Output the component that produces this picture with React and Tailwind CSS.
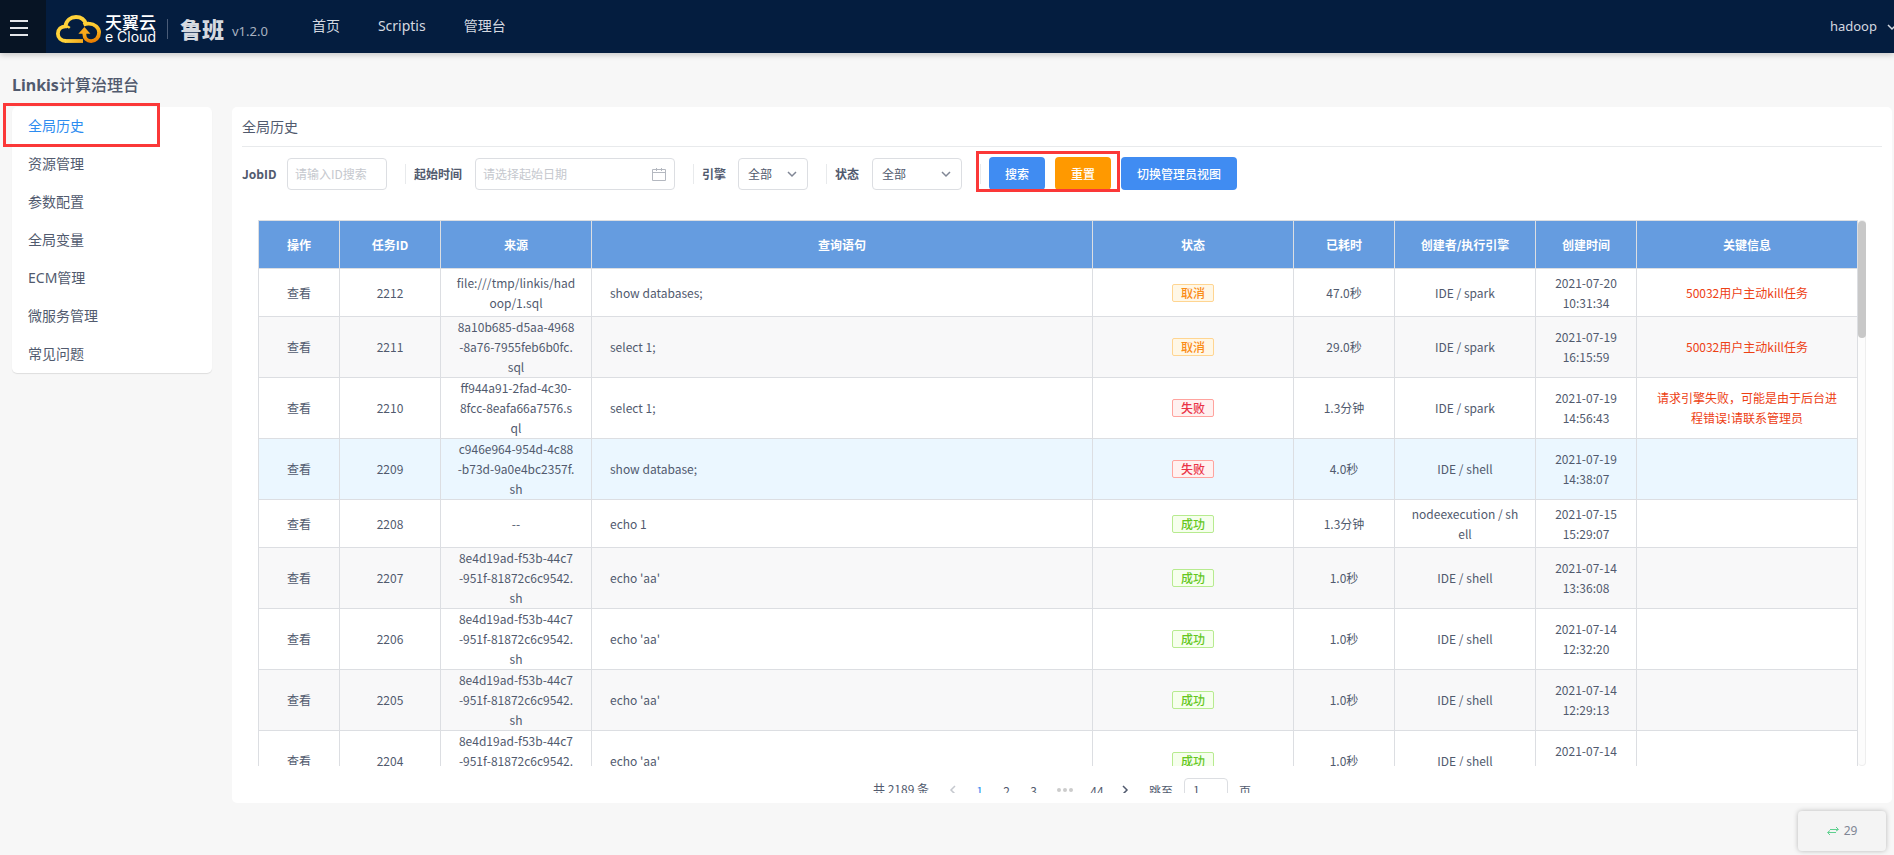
import React from "react";

const menu = ["全局历史", "资源管理", "参数配置", "全局变量", "ECM管理", "微服务管理", "常见问题"];

const columns = [
  { title: "操作", width: "w-[81px]" },
  { title: "任务ID", width: "w-[101px]" },
  { title: "来源", width: "w-[151px]" },
  { title: "查询语句", width: "w-auto" },
  { title: "状态", width: "w-[201px]" },
  { title: "已耗时", width: "w-[101px]" },
  { title: "创建者/执行引擎", width: "w-[141px]" },
  { title: "创建时间", width: "w-[101px]" },
  { title: "关键信息", width: "w-[221px]" },
];

const AA = ["8e4d19ad-f53b-44c7", "-951f-81872c6c9542.", "sh"];

const rows = [
  { id: 2212, source: ["file:///tmp/linkis/had", "oop/1.sql"], code: "show databases;", status: "取消", cost: "47.0秒", engine: ["IDE / spark"], time: ["2021-07-20", "10:31:34"], info: ["50032用户主动kill任务"] },
  { id: 2211, source: ["8a10b685-d5aa-4968", "-8a76-7955feb6b0fc.", "sql"], code: "select 1;", status: "取消", cost: "29.0秒", engine: ["IDE / spark"], time: ["2021-07-19", "16:15:59"], info: ["50032用户主动kill任务"] },
  { id: 2210, source: ["ff944a91-2fad-4c30-", "8fcc-8eafa66a7576.s", "ql"], code: "select 1;", status: "失败", cost: "1.3分钟", engine: ["IDE / spark"], time: ["2021-07-19", "14:56:43"], info: ["请求引擎失败，可能是由于后台进", "程错误!请联系管理员"] },
  { id: 2209, source: ["c946e964-954d-4c88", "-b73d-9a0e4bc2357f.", "sh"], code: "show database;", status: "失败", cost: "4.0秒", engine: ["IDE / shell"], time: ["2021-07-19", "14:38:07"], info: [], active: true },
  { id: 2208, source: ["--"], code: "echo 1", status: "成功", cost: "1.3分钟", engine: ["nodeexecution / sh", "ell"], time: ["2021-07-15", "15:29:07"], info: [] },
  { id: 2207, source: AA, code: "echo 'aa'", status: "成功", cost: "1.0秒", engine: ["IDE / shell"], time: ["2021-07-14", "13:36:08"], info: [] },
  { id: 2206, source: AA, code: "echo 'aa'", status: "成功", cost: "1.0秒", engine: ["IDE / shell"], time: ["2021-07-14", "12:32:20"], info: [] },
  { id: 2205, source: AA, code: "echo 'aa'", status: "成功", cost: "1.0秒", engine: ["IDE / shell"], time: ["2021-07-14", "12:29:13"], info: [] },
  { id: 2204, source: AA, code: "echo 'aa'", status: "成功", cost: "1.0秒", engine: ["IDE / shell"], time: ["2021-07-14"], info: [] },
];

const tagStyle = {
  取消: "border-[#ffd591] bg-[#fff7e6] text-[#fa8c16]",
  失败: "border-[#ffa39e] bg-[#fff1f0] text-[#ea3347]",
  成功: "border-[#b7eb8f] bg-[#f6ffed] text-[#65c71e]",
};

function Lines({ items }) {
  return items.map((line, i) => (
    <span key={i} className="block whitespace-nowrap">
      {line}
    </span>
  ));
}

function Chevron({ className, d }) {
  return (
    <svg viewBox="0 0 10 10" className={className} fill="none" stroke="currentColor" strokeWidth="1.5" aria-hidden="true">
      <path d={d} />
    </svg>
  );
}

function CloudLogo() {
  return (
    <svg viewBox="0 0 45 28" className="h-7 w-[45px] shrink-0" fill="none" strokeWidth="3.8" aria-hidden="true">
      <defs>
        <linearGradient id="ring" gradientUnits="userSpaceOnUse" x1="34" y1="9" x2="36" y2="27">
          <stop offset="0" stopColor="#ffcf35" />
          <stop offset="0.45" stopColor="#f9b01c" />
          <stop offset="1" stopColor="#e97c00" />
        </linearGradient>
        <linearGradient id="base" gradientUnits="userSpaceOnUse" x1="8" y1="0" x2="28" y2="0">
          <stop offset="0" stopColor="#ffd53f" />
          <stop offset="1" stopColor="#f3a51a" />
        </linearGradient>
      </defs>
      <path d="M27 26H9.500" stroke="url(#base)" />
      <path
        d="M10 26C5.200 26 1.900 22.800 1.900 18.700c0-4.400 3.200-7.300 7.500-7.400C10.200 5.600 14.500 2 20 2c5 0 8.700 2.800 10 7.300"
        stroke="#ffd23a"
      />
      <path d="M9 11.300c2 0 3.600.5 4.800 1.500" stroke="#ffd23a" strokeWidth="2.400" />
      <path
        d="M27.500 9.700c1.800-.8 3.600-1.200 5.400-1.100 6 .2 10.200 4 10.200 9 0 5-3.700 8.500-8 8.500-4.100 0-6.700-2.800-6.700-6.600V17"
        stroke="url(#ring)"
      />
      <path d="M22.400 18.700l6-6.700 6 6.700z" fill="#f9a81c" />
    </svg>
  );
}

function Header() {
  return (
    <header className="relative z-10 flex h-[53px] items-stretch bg-[#041d3f] text-[#d5d9e0] shadow-[0_2px_6px_rgba(0,0,0,0.2)]">
      <button aria-label="菜单" className="flex w-[46px] flex-col items-start justify-center gap-[5px] bg-[#071424] pt-[3px] pl-[10px]">
        <span className="block h-[2px] w-[18px] bg-[#e4e6ea]" />
        <span className="block h-[2px] w-[18px] bg-[#e4e6ea]" />
        <span className="block h-[2px] w-[18px] bg-[#e4e6ea]" />
      </button>
      <div className="flex items-center pt-[5px] pl-[10px]">
        <CloudLogo />
        <div className="ml-1 flex w-[51px] flex-col whitespace-nowrap text-white">
          <span className="text-[17px] leading-4 font-medium">天翼云</span>
          <span className="font-[Inter,sans-serif] text-[14px] leading-3">e Cloud</span>
        </div>
        <span className="ml-[11px] h-5 w-px bg-[#4a5c78]" />
        <span className="ml-3 text-[22px] leading-5 font-black">鲁班</span>
        <span className="ml-2 pt-1 text-[13px] leading-5 text-[#a9b2c0]">v1.2.0</span>
      </div>
      <nav className="ml-11 flex items-center gap-[38px] pb-[2px] text-[14px]">
        <a href="#home">首页</a>
        <a href="#scriptis">Scriptis</a>
        <a href="#console">管理台</a>
      </nav>
      <button className="ml-auto flex items-center gap-[10px] overflow-hidden text-[13px]">
        hadoop
        <Chevron className="-mr-[3px] h-[10px] w-[10px]" d="M1 3l4 4 4-4" />
      </button>
    </header>
  );
}

function Sidebar() {
  return (
    <aside className="relative w-[200px] shrink-0 self-start rounded-[5px] bg-white shadow-[0_1px_1px_rgba(0,0,0,0.1)]">
      <ul>
        {menu.map((item, i) => (
          <li key={item}>
            <a href={"#menu-" + i} className={"block pl-4 text-[14px] leading-[38px] " + (i === 0 ? "text-[#2d8cf0]" : "text-[#515a6e]")}>
              {item}
            </a>
          </li>
        ))}
      </ul>
      <div className="pointer-events-none absolute -top-1 -left-[9px] h-11 w-[157px] border-[3px] border-[#fb3838]" />
    </aside>
  );
}

function Divider() {
  return <span className="h-5 w-px bg-[#e8eaec]" />;
}

function FilterSelect({ id, width }) {
  return (
    <span className={"relative flex h-8 items-center " + width}>
      <select id={id} className="h-8 w-full appearance-none rounded border border-[#dcdee2] bg-white pl-[9px] text-[12px] font-normal text-[#515a6e]">
        <option>全部</option>
      </select>
      <Chevron className="pointer-events-none absolute right-[11px] h-[10px] w-[10px] text-[#808695]" d="M1 3l4 4 4-4" />
    </span>
  );
}

function Filters() {
  return (
    <form className="mt-[10px] flex h-[33px] items-center text-[12px] font-bold text-[#515a6e] *:shrink-0">
      <label htmlFor="job" className="w-[45px]">JobID</label>
      <input id="job" placeholder="请输入ID搜索" className="mr-[18px] h-8 w-[100px] rounded border border-[#dcdee2] px-[7px] font-normal placeholder:text-[#c5c8ce]" />
      <Divider />
      <label htmlFor="date" className="ml-2 w-[61px]">起始时间</label>
      <span className="relative mr-[18px] flex items-center">
        <input id="date" placeholder="请选择起始日期" className="h-8 w-[200px] rounded border border-[#dcdee2] px-[7px] font-normal placeholder:text-[#c5c8ce]" />
        <svg viewBox="0 0 14 14" className="absolute right-[9px] h-[14px] w-[14px] text-[#b4b8c0]" fill="none" stroke="currentColor" aria-hidden="true">
          <path d="M.5 2.500h13v11H.5zM.5 5.500h13M4.500 1v3M9.500 1v3" />
        </svg>
      </span>
      <Divider />
      <label htmlFor="engine" className="ml-2 w-9">引擎</label>
      <FilterSelect id="engine" width="mr-[18px] w-[70px]" />
      <Divider />
      <label htmlFor="state" className="ml-2 w-[37px]">状态</label>
      <FilterSelect id="state" width="mr-[18px] w-[90px]" />
      <span className="relative flex items-center">
        <Divider />
        <button type="button" className="ml-2 h-[33px] w-14 rounded bg-[#408cf2] font-medium text-white">搜索</button>
        <button type="button" className="ml-[10px] h-[33px] w-14 rounded bg-[#f90] font-medium text-white">重置</button>
        <span className="pointer-events-none absolute -top-[6px] -left-1 h-[41px] w-36 border-[3px] border-[#fb3838]" />
      </span>
      <button type="button" className="ml-[10px] h-[33px] w-[116px] rounded bg-[#408cf2] font-medium text-white">切换管理员视图</button>
    </form>
  );
}

function HistoryTable() {
  return (
    <div className="mx-4 mt-[30px] flex h-[546px] overflow-hidden">
      <div className="min-w-0 flex-1 overflow-hidden">
        <table className="w-full table-fixed border-separate border-spacing-0 border-t border-l border-[#dcdee2] text-center text-[12px] leading-5 text-[#515a6e]">
          <thead>
            <tr className="h-12">
              {columns.map((c) => (
                <th key={c.title} className={"border-r border-b border-[#dcdee2] bg-[#659ce0] p-0 font-bold text-white " + c.width}>
                  {c.title}
                </th>
              ))}
            </tr>
          </thead>
          <tbody>
            {rows.map((r, i) => (
              <tr
                key={r.id}
                className={
                  "h-12 *:border-r *:border-b *:border-[#dcdee2] *:p-0 " +
                  (r.active ? "bg-[#ebf7ff]" : i % 2 ? "bg-[#f8f8f9]" : "bg-white")
                }
              >
                <td><a href={"#job-" + r.id}>查看</a></td>
                <td>{r.id}</td>
                <td><Lines items={r.source} /></td>
                <td className="text-left"><span className="ml-[18px]">{r.code}</span></td>
                <td>
                  <span className={"mx-auto block h-[18px] w-[42px] rounded-[2px] border leading-4 font-medium " + tagStyle[r.status]}>{r.status}</span>
                </td>
                <td>{r.cost}</td>
                <td><Lines items={r.engine} /></td>
                <td>
                  <Lines items={r.time} />
                  {r.time.length === 1 && <span className="block h-5" />}
                </td>
                <td className="text-[#ed4014]"><Lines items={r.info} /></td>
              </tr>
            ))}
          </tbody>
        </table>
      </div>
      <div className="w-2 rounded border border-l-0 border-[#eeeeee] bg-[#fcfcfc]">
        <div className="h-[117px] w-2 rounded bg-[#c8c8c8]" />
      </div>
    </div>
  );
}

function Pager() {
  return (
    <div className="mt-3 flex h-[15px] items-start justify-center overflow-hidden text-[12px] leading-[26px] text-[#515a6e]">
      <span className="mr-[10px] leading-[22px]">共 2189 条</span>
      <button aria-label="上一页" className="flex h-6 w-[27px] items-center justify-center text-[#c5c8ce]">
        <Chevron className="h-[10px] w-[10px]" d="M7 1L3 5l4 4" />
      </button>
      <button className="w-[27px] text-[#2d8cf0]">1</button>
      <button className="w-[27px]">2</button>
      <button className="w-[27px]">3</button>
      <button aria-label="更多" className="flex h-6 w-9 items-center justify-center gap-[2px]">
        <span className="h-1 w-1 rounded-full bg-[#ccc]" />
        <span className="h-1 w-1 rounded-full bg-[#ccc]" />
        <span className="h-1 w-1 rounded-full bg-[#ccc]" />
      </button>
      <button className="w-7">44</button>
      <button aria-label="下一页" className="flex h-6 w-7 items-center justify-center">
        <Chevron className="h-[10px] w-[10px]" d="M3 1l4 4-4 4" />
      </button>
      <label htmlFor="page" className="ml-[10px]">跳至</label>
      <input id="page" defaultValue="1" className="mx-[11px] h-6 w-11 rounded border border-[#dcdee2] px-2" />
      <span>页</span>
    </div>
  );
}

export default function App() {
  return (
    <div className="flex min-h-screen flex-col overflow-hidden bg-[#f7f7f7] font-['Noto_Sans','Noto_Sans_CJK_SC',sans-serif]">
      <Header />
      <h1 className="mt-5 ml-3 text-[16px] leading-6 font-bold text-[#515a6e]">
        Linkis<span className="font-medium">计算治理台</span>
      </h1>
      <div className="mt-[10px] mr-[2px] ml-3 flex gap-5">
        <Sidebar />
        <main className="min-w-0 flex-1 rounded-[5px] bg-white px-[10px] pb-[10px]">
          <h2 className="border-b border-[#e8eaec] pt-2 pb-[7px] text-[14px] leading-6 text-[#515a6e]">全局历史</h2>
          <div className="font-['Noto_Sans_CJK_SC',sans-serif]">
            <Filters />
            <HistoryTable />
            <Pager />
          </div>
        </main>
      </div>
      <button className="mt-2 mr-2 flex h-10 w-[88px] items-center justify-center gap-[5px] self-end rounded bg-[#f4f4f4] text-[12px] text-[#808695] shadow-[0_0_5px_rgba(0,0,0,0.25)]">
        <svg viewBox="0 0 12 10" className="h-[10px] w-3 text-[#5fd08f]" fill="none" stroke="currentColor" aria-hidden="true">
          <path d="M3 3.500h8M9 1l2.500 2.500L9 5" />
          <path d="M9 6.500H1M3 4.500L.5 6.500 3 9" />
        </svg>
        29
      </button>
    </div>
  );
}
